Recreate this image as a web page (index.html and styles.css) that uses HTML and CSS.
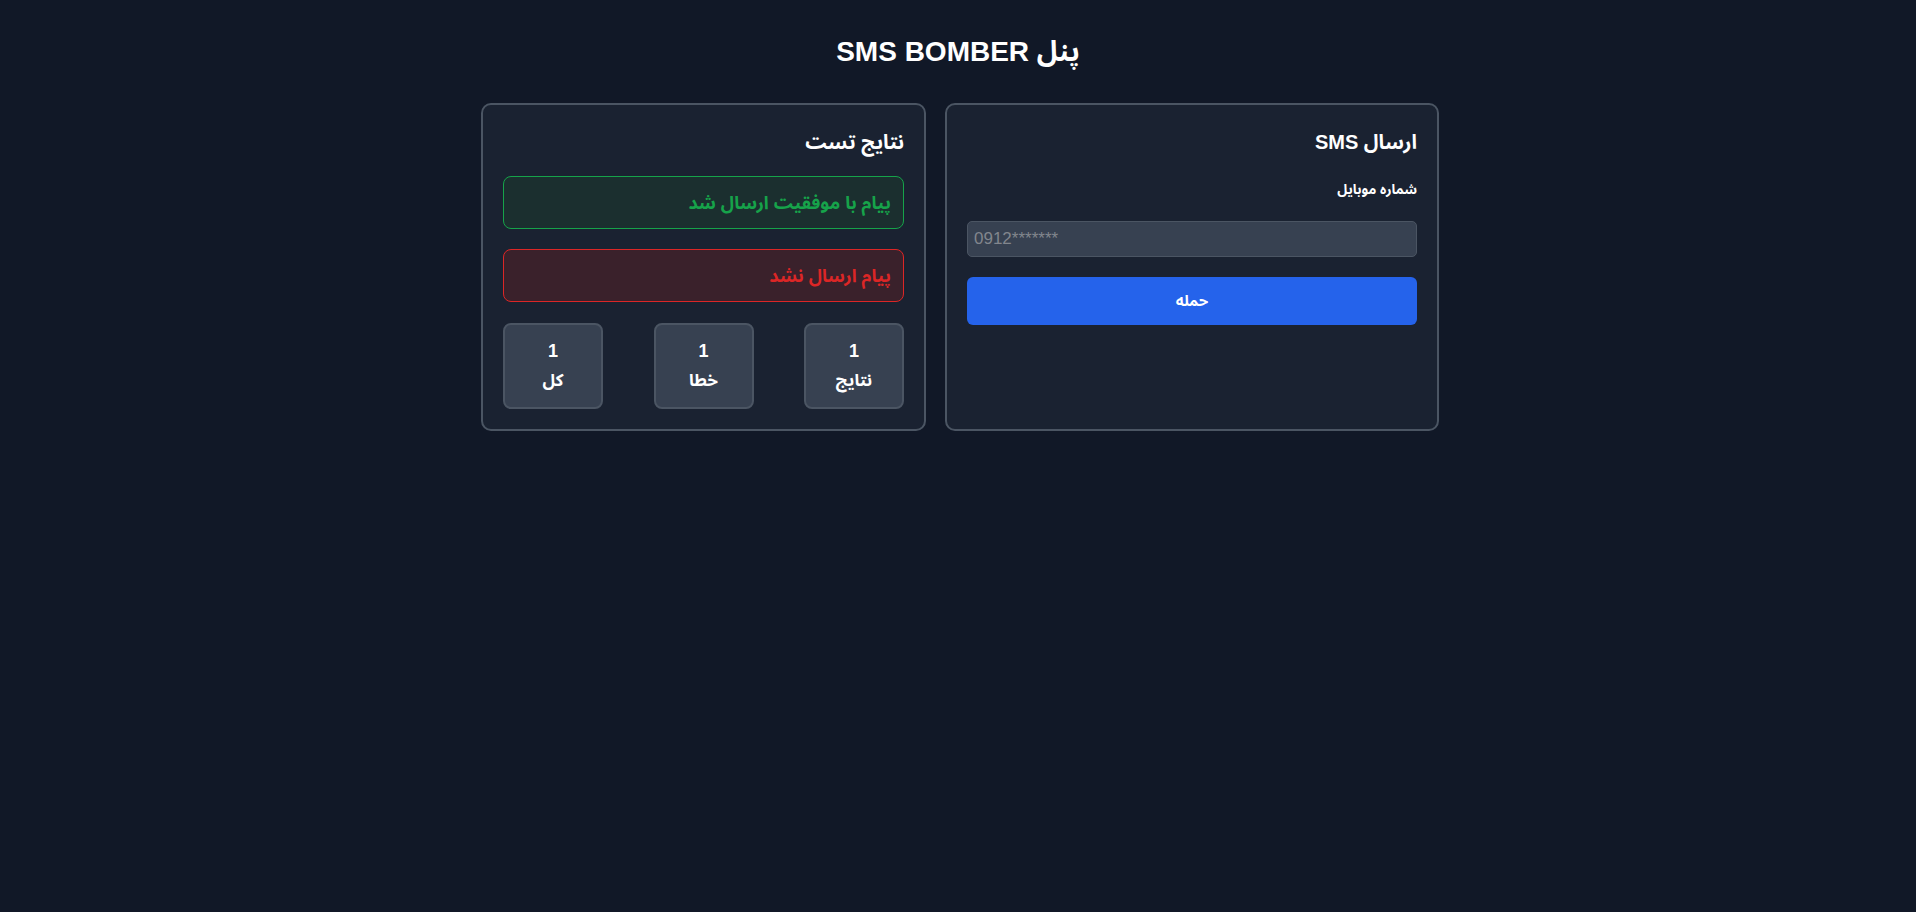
FILE: index.html
```html
<!DOCTYPE html>
<html lang="fa" dir="rtl">
<head>
    <meta charset="UTF-8">
    <meta name="viewport" content="width=device-width, initial-scale=1.0">
    <title>SMS BOMBER</title>
    <link rel="stylesheet" href="styles.css">
</head>
<body>
    <h1 class="page-title">پنل SMS BOMBER</h1>

    <div class="panels">
        <div class="card card-send">
            <h2>ارسال SMS</h2>
            <label class="field-label" for="phone">شماره موبایل</label>
            <input class="phone-input" id="phone" type="text" dir="ltr" placeholder="0912*******">
            <button class="attack-btn">حمله</button>
        </div>

        <div class="card card-results">
            <h2>نتایج تست</h2>
            <div class="msg msg-ok">پیام با موفقیت ارسال شد</div>
            <div class="msg msg-fail">پیام ارسال نشد</div>
            <div class="stats">
                <div class="stat">
                    <span class="stat-num">1</span>
                    <span class="stat-label">نتایج</span>
                </div>
                <div class="stat">
                    <span class="stat-num">1</span>
                    <span class="stat-label">خطا</span>
                </div>
                <div class="stat">
                    <span class="stat-num">1</span>
                    <span class="stat-label">کل</span>
                </div>
            </div>
        </div>
    </div>
</body>
</html>
```

FILE: styles.css
```css
body {
    margin: 0;
    background-color: #111827;
    color: #ffffff;
    font-family: "Liberation Sans", "Noto Sans Arabic", "DejaVu Sans", sans-serif;
}
.page-title {
    margin: 0;
    padding-top: 33px;
    text-align: center;
    font-size: 28px;
    font-weight: 700;
    line-height: 38px;
}
.panels {
    display: flex;
    justify-content: center;
    gap: 19px;
    margin-top: 32px;
    padding-left: 4px;
}
.card {
    background-color: #1a2231;
    border: 2px solid #4b5563;
    border-radius: 10px;
    padding: 20px;
}
.card-send {
    width: 450px;
}
.card-results {
    width: 401px;
}
.card h2 {
    margin: 0;
    font-size: 20px;
    font-weight: 700;
    line-height: 28px;
    padding-top: 3px;
}
.field-label {
    display: block;
    margin-top: 22px;
    font-size: 13.5px;
    font-weight: 700;
    line-height: 24px;
}
.phone-input {
    display: block;
    box-sizing: border-box;
    width: 100%;
    height: 36px;
    margin-top: 19px;
    padding: 0 6px;
    background-color: #374151;
    border: 1px solid #4b5563;
    border-radius: 5px;
    color: #ffffff;
    font-family: "Liberation Sans", sans-serif;
    font-size: 17px;
    text-align: left;
}
.phone-input::placeholder {
    color: #82868d;
}
.attack-btn {
    display: block;
    width: 100%;
    height: 48px;
    margin-top: 20px;
    border: none;
    border-radius: 6px;
    background-color: #2563eb;
    color: #ffffff;
    font-family: "Liberation Sans", "Noto Sans Arabic", "DejaVu Sans", sans-serif;
    font-size: 15px;
    font-weight: 700;
}
.msg {
    box-sizing: border-box;
    height: 53px;
    margin-top: 20px;
    padding: 0 12px;
    border-radius: 8px;
    font-size: 18px;
    font-weight: 700;
    display: flex;
    align-items: center;
}
.msg-ok {
    background-color: #1b2f2f;
    border: 1px solid #16a34a;
    color: #16a34a;
}
.msg-fail {
    background-color: #3a212b;
    border: 1px solid #dc2626;
    color: #dc2626;
}
.stats {
    display: flex;
    justify-content: space-between;
    margin-top: 21px;
}
.stat {
    box-sizing: border-box;
    width: 100px;
    height: 86px;
    background-color: #374151;
    border: 2px solid #4b5563;
    border-radius: 8px;
    display: flex;
    flex-direction: column;
    align-items: center;
    justify-content: center;
    gap: 4px;
    font-weight: 700;
}
.stat-num {
    font-size: 18px;
    line-height: 26px;
}
.stat-label {
    font-size: 17px;
    line-height: 26px;
}
```
